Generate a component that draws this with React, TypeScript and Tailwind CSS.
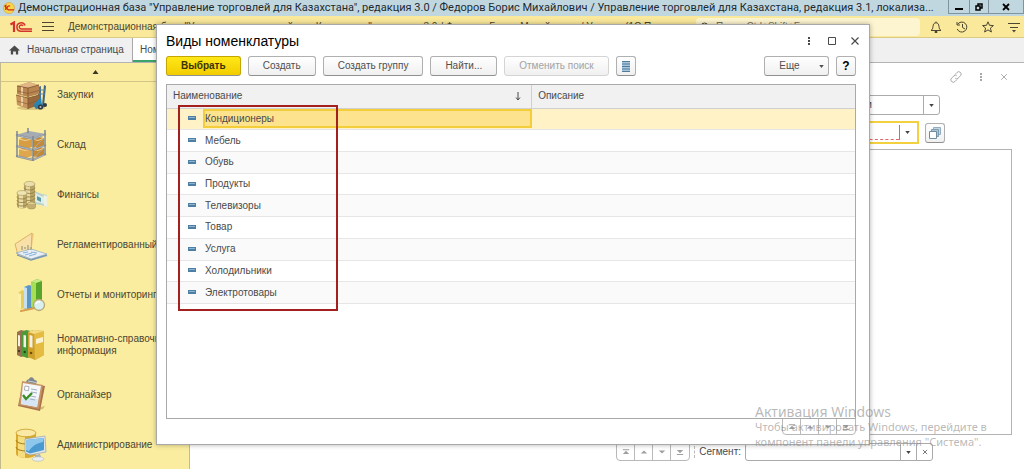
import React, { useState } from 'react';
import clsx from 'clsx';

interface Section {
  title: string;
  icon: React.ReactNode;
}

const CratesIcon = () => (
  <svg viewBox="0 0 36 36" className="w-9 h-9 shrink-0">
    <ellipse cx="18" cy="31" rx="14" ry="2" fill="#d9c67c" />
    <path d="M25 10l3-1v20h-3z" fill="#4d7391" />
    <path d="M31 8l2 1-2 20-2-1z" fill="#3f6583" />
    <path d="M26 13h6M26 17h6" stroke="#5c88a8" strokeWidth="1.2" />
    <path d="M4 9l12-4 10 3v9l-11 3-11-3z" fill="#b98651" />
    <path d="M4 9l12-4 10 3-11 3z" fill="#e0b784" />
    <path d="M3 18l12 3v11L4 28z" fill="#c8955e" />
    <path d="M15 21l11-3v10l-11 4z" fill="#9a693b" />
    <path d="M3 18l12 3 11-3M15 11v21M4 9l11 2 11-3" stroke="#7b522b" strokeWidth=".8" fill="none" />
    <path d="M8 10v7l2 .5v-7M8 19.500v9l2 .5v-9" fill="#e9cfa3" />
    <path d="M4 14l11 2.500 11-3M4 24l11 3 11-4" stroke="#7d5530" strokeWidth=".6" fill="none" />
    <path d="M21 27l7-7 1 8-5 3z" fill="#2787b6" />
    <path d="M20 28l10-1 2 3-9 2z" fill="#2e7ea8" />
    <circle cx="27.500" cy="30" r="2.600" fill="#353a40" />
    <circle cx="27.500" cy="30" r="1" fill="#b9c0c5" />
    <circle cx="32" cy="28" r="2" fill="#353a40" />
  </svg>
);

const RackIcon = () => (
  <svg viewBox="0 0 36 36" className="w-9 h-9 shrink-0">
    <path d="M3 30l15 4 15-6-3-2-14 5z" fill="#dcc97e" />
    <path d="M6 12l6-2 7 2v8l-6 2-7-2z" fill="#d69d45" />
    <path d="M20 12l6-2 5 1v8l-6 2-5-1z" fill="#c48a35" />
    <path d="M6 22l6-2 7 2v7l-6 2-7-2z" fill="#dda64f" />
    <path d="M20 22l6-2 5 1v7l-6 2-5-1z" fill="#c38933" />
    <path d="M6 12l6 1.500 7-1.500 6 1.500 5-2M6 22l6 1.500 7-1.500 6 1.500 5-2" stroke="#f0cf8d" strokeWidth="1" fill="none" />
    <path d="M3 8l13-4 17 3-13 5z" fill="#a5abb3" />
    <path d="M3 8l17 4 13-5M3 19l17 4 13-5M3 29l17 4 13-6" stroke="#858c96" strokeWidth="1.800" fill="none" />
    <path d="M3 8l17 4 13-5M3 19l17 4 13-5M3 29l17 4 13-6" stroke="#cdd2d8" strokeWidth=".6" fill="none" />
    <path d="M4 4v26M20 9v25M32 3v25M15 1v5" stroke="#7f8792" strokeWidth="1.500" />
    <path d="M20 22l12-12M20 31l12-11" stroke="#a9afb7" strokeWidth=".8" />
  </svg>
);

const MoneyIcon = () => (
  <svg viewBox="0 0 36 36" className="w-9 h-9 shrink-0">
    <path d="M21 14l8 3 5 1v12l-6-2-7-1z" fill="#b9d3cd" />
    <path d="M22 16l6 3 5 1v8l-5-2-6-1z" fill="#dfeee6" />
    <path d="M24 19l4 2v4l-4-2z" fill="#5c9aa3" />
    <path d="M31 18l3 1v11l-3-1z" fill="#eef2e3" />
    <path d="M11 7v19a5.500 2.500 0 0 0 11 0V7z" fill="#b8a566" />
    <path d="M13 8v20h4V8z" fill="#e5d8a0" />
    <ellipse cx="16.500" cy="7" rx="5.500" ry="2.600" fill="#eadfac" stroke="#a8955a" strokeWidth=".6" />
    <path d="M11 10.500a5.500 2.500 0 0 0 11 0M11 14a5.500 2.500 0 0 0 11 0M11 17.500a5.500 2.500 0 0 0 11 0M11 21a5.500 2.500 0 0 0 11 0M11 24.500a5.500 2.500 0 0 0 11 0" stroke="#8e7b42" strokeWidth=".8" fill="none" />
    <path d="M4 16v13a5 2.500 0 0 0 10 0V16z" fill="#bca867" />
    <path d="M6 17v14h4V17z" fill="#eadda6" />
    <ellipse cx="9" cy="16" rx="5" ry="2.400" fill="#efe4b4" stroke="#a8955a" strokeWidth=".6" />
    <path d="M4 19.500a5 2.500 0 0 0 10 0M4 23a5 2.500 0 0 0 10 0M4 26.500a5 2.500 0 0 0 10 0" stroke="#8e7b42" strokeWidth=".8" fill="none" />
    <ellipse cx="18.500" cy="27" rx="4" ry="2" fill="#e2d395" stroke="#9a884d" strokeWidth=".6" />
    <path d="M14.500 27v3a4 2 0 0 0 8 0v-3" fill="#c3b070" stroke="#9a884d" strokeWidth=".5" />
  </svg>
);

const ReportingIcon = () => (
  <svg viewBox="0 0 36 36" className="w-9 h-9 shrink-0">
    <path d="M2 17L19 6l2 1-3 19-13 3z" fill="#f3cf86" />
    <path d="M2 17L19 6l-1 18-13 4z" fill="#f8e0a8" stroke="#d9a452" strokeWidth=".8" />
    <path d="M4 27l14-3 17 5-15 4z" fill="#a6bdd0" />
    <path d="M3 26l15-4 16 5-16 5z" fill="#e8eff6" stroke="#8fa8bd" strokeWidth=".7" />
    <path d="M4 28l14 5 16-5" stroke="#7592ac" strokeWidth="1.200" fill="none" />
    <path d="M10 26l5-1M12 28l7-2M16 29l7-2M18 25l6 1" stroke="#86b1d8" strokeWidth="1" />
    <path d="M9 23v-4M12 22v-2M15 23v-5M18 23v-3" stroke="#a6a583" strokeWidth="1.400" />
  </svg>
);

const ChartIcon = () => (
  <svg viewBox="0 0 36 36" className="w-9 h-9 shrink-0">
    <path d="M5 16l4-3 3 1v17l-4 1-3-2z" fill="#e8cd5d" />
    <path d="M5 16l3 1v15l-3-2z" fill="#fbf0aa" />
    <path d="M11 10l5-2 3 1v22l-5 2-3-2z" fill="#5b97c2" />
    <path d="M11 10l3 1v21l-3-1z" fill="#c6e1f2" />
    <path d="M18 5l6-3 5 2v25l-6 3-5-2z" fill="#57a52a" />
    <path d="M18 5l5 1v25l-5-1z" fill="#a8de55" />
    <path d="M18 5l6-3 5 2-6 2z" fill="#c8ec84" />
    <path d="M22 31L8 34" stroke="#d7a151" strokeWidth="2.200" strokeLinecap="round" />
    <circle cx="26" cy="28" r="5.500" fill="#d9eff0" stroke="#b8a86b" strokeWidth="1.300" />
    <path d="M23 27a3 3 0 0 1 4-2" stroke="#fff" strokeWidth="1.500" fill="none" />
  </svg>
);

const BindersIcon = () => (
  <svg viewBox="0 0 36 36" className="w-9 h-9 shrink-0">
    <path d="M4 5l4-2 4 1v25l-4 1-4-2z" fill="#9b6f52" />
    <path d="M9 5l4-2 5 1v26l-4 1-5-2z" fill="#4c9a38" />
    <path d="M15 5l5-2 11 1v24l-9 5-7-3z" fill="#cf9f2b" />
    <path d="M21 6l10-2v24l-9 5z" fill="#e5bb42" />
    <path d="M15 5l6-2 10 1-10 3z" fill="#f3db85" />
    <path d="M5 8l2 .5v11l-2-.5zM10.500 8l2.500.5v12l-2.500-.5zM16.500 8l3 .7v12l-3-.7z" fill="#f3f0e4" />
    <path d="M23 12l7-2v5l-7 2z" fill="#fbf3cf" />
    <circle cx="6" cy="24" r="1.100" fill="#3d2c20" />
    <circle cx="11.700" cy="25" r="1.200" fill="#1d4d17" />
    <circle cx="18" cy="26" r="1.300" fill="#6e500e" />
  </svg>
);

const ClipboardIcon = () => (
  <svg viewBox="0 0 36 36" className="w-9 h-9 shrink-0">
    <path d="M28 30l4-1-2 3-5 1z" fill="#cfbd72" />
    <path d="M10 5l22 4-5 25-22-5z" fill="#a9734a" />
    <path d="M9 4l21 4-4 24-20-4z" fill="#c69466" />
    <path d="M10 6l18 3-4 21-16-3z" fill="#f4f7fa" />
    <path d="M10 20l15 2-1 8-16-3z" fill="#d6e6f4" />
    <path d="M12 9l4 .7-.6 4-4-.7z" fill="#fff" stroke="#8c9299" strokeWidth=".7" />
    <path d="M18 12l6 1M18 15l6 1M17 19l6 1M17 22l5 1" stroke="#9eb0c0" strokeWidth="1" />
    <path d="M10 18l3 4 6-6" stroke="#3c8d24" strokeWidth="2.400" fill="none" />
    <path d="M14 3l2-1c1-3 5-2 5 .5l3 1.500-1 3-10-2z" fill="#7e868f" />
    <path d="M15 4l8 1.500" stroke="#c9ced4" strokeWidth="1" />
  </svg>
);

const ServerIcon = () => (
  <svg viewBox="0 0 36 36" className="w-9 h-9 shrink-0">
    <path d="M3 6v21a10 4 0 0 0 20 0V6z" fill="#d9aa2d" />
    <path d="M5 8v22l7 1V9z" fill="#f6dd7d" />
    <path d="M3 13a10 4 0 0 0 20 0M3 20a10 4 0 0 0 20 0" stroke="#a87e18" strokeWidth="1" fill="none" />
    <ellipse cx="13" cy="6" rx="10" ry="3.800" fill="#f9e9a4" stroke="#c69a29" strokeWidth=".8" />
    <path d="M12 12l20-3 1 16-16 3-5-2z" fill="#dfe5ea" stroke="#98a3ad" strokeWidth=".7" />
    <path d="M13 13l18-2v12l-14 3.500-4-2z" fill="#4a99d0" />
    <path d="M13 13l18-2-1 4c-6 1-11 4-14 9l-3-1z" fill="#8dc8ec" />
    <path d="M22 28l5-1 1 3-6 1z" fill="#aab3bb" />
    <ellipse cx="25" cy="32" rx="6" ry="2.200" fill="#eceff1" stroke="#adb5bc" strokeWidth=".6" />
  </svg>
);

const sections: Section[] = [
  { title: 'Закупки', icon: <CratesIcon /> },
  { title: 'Склад', icon: <RackIcon /> },
  { title: 'Финансы', icon: <MoneyIcon /> },
  { title: 'Регламентированный', icon: <ReportingIcon /> },
  { title: 'Отчеты и мониторинг', icon: <ChartIcon /> },
  { title: 'Нормативно-справочная информация', icon: <BindersIcon /> },
  { title: 'Органайзер', icon: <ClipboardIcon /> },
  { title: 'Администрирование', icon: <ServerIcon /> }
];

const kinds = [
  'Кондиционеры',
  'Мебель',
  'Обувь',
  'Продукты',
  'Телевизоры',
  'Товар',
  'Услуга',
  'Холодильники',
  'Электротовары'
];

const Caret = ({ className }: { className?: string }) => (
  <svg viewBox="0 0 6 4" className={clsx('w-[5px] h-[3px]', className)}>
    <path d="M0 0h6L3 4z" fill="currentColor" />
  </svg>
);

const DotsIcon = () => (
  <svg viewBox="0 0 10 10" className="w-2.5 h-2.5" fill="currentColor">
    <path d="M4 1h2v2H4zM4 4h2v2H4zM4 7h2v2H4z" />
  </svg>
);

const CrossIcon = ({ className }: { className?: string }) => (
  <svg viewBox="0 0 10 10" className={className} stroke="currentColor" strokeWidth="1.200">
    <path d="M1.500 1.500l7 7M8.500 1.500l-7 7" />
  </svg>
);

const pagerPaths = [
  { label: 'В начало', d: 'M1 1h8v1.200H1zM5 3l4 4H1z' },
  { label: 'Назад', d: 'M5 2.500l4 4H1z' },
  { label: 'Вперед', d: 'M1 2.500h8l-4 4z' },
  { label: 'В конец', d: 'M1 2h8L5 6zM1 7h8v1.200H1z' }
];

function Pager() {
  return (
    <div className="flex border border-[#b9b9b9] divide-x divide-[#b9b9b9] rounded-b-sm">
      {pagerPaths.map((p) => (
        <button key={p.label} type="button" aria-label={p.label} className="w-[18px] h-[15px] flex items-center justify-center text-[#a0a0a0]">
          <svg viewBox="0 0 10 9" className="w-2 h-2" fill="currentColor">
            <path d={p.d} />
          </svg>
        </button>
      ))}
    </div>
  );
}

interface ToolButtonProps {
  children: React.ReactNode;
  className?: string;
  disabled?: boolean;
  label?: string;
}

function ToolButton({ children, className, disabled, label }: ToolButtonProps) {
  return (
    <button
      type="button"
      disabled={disabled}
      aria-label={label}
      className={clsx(
        'h-5 flex items-center justify-center rounded-[3px] border whitespace-nowrap',
        className ?? 'px-3.5 bg-linear-to-b from-white to-[#f0f0f0]',
        disabled ? 'border-[#d4d4d4] text-[#a3a3a3]' : 'border-[#b0b0b0] border-b-[#909090]'
      )}
    >
      {children}
    </button>
  );
}

function TitleBar() {
  return (
    <header className="h-4 flex items-center bg-[#c1d7e0] pl-[3px] font-['Roboto','Open_Sans',sans-serif] text-[11px] text-[#1d2a30]">
      <svg viewBox="0 0 12 12" className="w-3 h-3 shrink-0 mr-[3px]">
        <circle cx="6" cy="6" r="5.500" fill="#f8d648" stroke="#dca24b" strokeWidth=".7" />
        <path d="M1.500 4.500l1.300-1v4.500M7 4.200a2 2 0 1 0-.2 3.600H11" stroke="#d2261d" strokeWidth="1.300" fill="none" />
      </svg>
      <h1 className="flex-1 min-w-0 truncate leading-4">
        Демонстрационная база "Управление торговлей для Казахстана", редакция 3.0 / Федоров Борис Михайлович / Управление торговлей для Казахстана, редакция 3.1, локализа...
      </h1>
      <div className="flex h-3.5 self-start ml-1 border border-t-0 border-[#7f949e] divide-x divide-[#7f949e] text-black">
        <button type="button" aria-label="Свернуть" className="w-[21px] flex items-center justify-center">
          <svg viewBox="0 0 8 8" className="w-2 h-2"><path d="M0 5h8v2H0z" /></svg>
        </button>
        <button type="button" aria-label="Развернуть" className="w-[19px] flex items-center justify-center">
          <svg viewBox="0 0 8 8" className="w-2 h-2" fill="none" stroke="currentColor" strokeWidth="1.500">
            <path d="M1 3h4v4H1zM3 3V1h4v4H5" />
          </svg>
        </button>
        <button type="button" aria-label="Закрыть" className="w-[34px] flex items-center justify-center">
          <svg viewBox="0 0 8 8" className="w-2 h-2" fill="none" stroke="currentColor" strokeWidth="1.800">
            <path d="M1 1l6 6M7 1L1 7" />
          </svg>
        </button>
      </div>
    </header>
  );
}

function AppBar() {
  return (
    <div className="h-[22px] flex items-center bg-[#fae89b] border-b border-[#dccb83] pl-2.5 pr-1 text-[#4a4632]">
      <svg viewBox="0 0 22 12" className="w-[22px] h-3 shrink-0" fill="none" stroke="#d4322b">
        <path d="M0.500 3.500L4 1.500V11" strokeWidth="2.200" />
        <path d="M15 4.500A4.200 4.200 0 1 0 11 10.300h11" strokeWidth="1.500" />
        <path d="M13 5A2 2 0 1 0 11 8h11" strokeWidth="1.300" />
      </svg>
      <button type="button" aria-label="Меню" className="ml-2.5">
        <svg viewBox="0 0 12 10" className="w-3 h-2.5" stroke="currentColor">
          <path d="M0 .5h12M0 4.500h12M0 8.500h12" />
        </svg>
      </button>
      <div className="flex-1 min-w-0 ml-[14px] truncate">
        Демонстрационная база "Управление торговлей для Казахстана", редакция 3.0 / Федоров Борис Михайлович / Управ... (1С:Предприятие)
      </div>
      <label className="flex items-center w-[224px] h-[18px] px-1 gap-1.5 bg-[#fdf5cf] rounded-sm">
        <svg viewBox="0 0 10 10" className="w-2.5 h-2.5 shrink-0" fill="none" stroke="currentColor">
          <circle cx="4.500" cy="4.500" r="3.500" />
          <path d="M7 7l3 3" />
        </svg>
        <input aria-label="Поиск" placeholder="Поиск Ctrl+Shift+F" className="w-full bg-transparent outline-none placeholder:text-[#77705a]" />
      </label>
      <div className="flex items-center gap-3.5 ml-2.5">
        <button type="button" aria-label="Уведомления">
          <svg viewBox="0 0 12 12" className="w-3 h-3" fill="none" stroke="currentColor">
            <path d="M6 .5v1M1 9.500c1.500-1 1.800-2 2-4C3.200 3 4.200 1.800 6 1.800S8.800 3 9 5.500c.2 2 .5 3 2 4zM5 10.500h2v1H5z" />
          </svg>
        </button>
        <button type="button" aria-label="История">
          <svg viewBox="0 0 12 12" className="w-3 h-3" fill="none" stroke="currentColor">
            <path d="M1.500 3.500A5 5 0 1 1 1.200 8M1 1v3h3M6.500 3v3.500L9 8" />
          </svg>
        </button>
        <button type="button" aria-label="Избранное">
          <svg viewBox="0 0 12 12" className="w-3 h-3" fill="none" stroke="currentColor">
            <path d="M6 .8l1.500 3.500 3.900.3-3 2.500 1 3.900L6 8.900 2.600 11l1-3.900-3-2.500 3.900-.3z" />
          </svg>
        </button>
        <button type="button" aria-label="Настройки">
          <svg viewBox="0 0 12 12" className="w-3 h-3" fill="none" stroke="currentColor">
            <path d="M0 2.500h12M2 6.500h8" />
            <path d="M4 9h4l-2 2.500z" fill="currentColor" stroke="none" />
          </svg>
        </button>
      </div>
    </div>
  );
}

function TabBar() {
  return (
    <nav className="h-[25px] flex bg-[#f0f0f0] border-b border-[#b3b3b3] text-[#4a4a4a]">
      <a href="#" className="w-[133px] flex items-center pl-[9px] gap-[7px] border-r border-[#a8a8a8]">
        <svg viewBox="0 0 12 10" className="w-[11px] h-2.5" fill="currentColor">
          <path d="M6 0l6 5.500h-2V10H7.500V6.500h-3V10H2V5.500H0z" />
        </svg>
        Начальная страница
      </a>
      <a href="#" className="flex items-center px-[7px] bg-white border-r border-[#a8a8a8] shadow-[inset_0_-2px_0_#3aa36c]">
        Номенклатура
      </a>
    </nav>
  );
}

function Sidebar() {
  return (
    <aside className="w-[190px] shrink-0 flex flex-col bg-[#fbed9f] border-x border-[#c4bb8d] text-[#4a4632]">
      <button type="button" aria-label="Прокрутить вверх" className="h-[19px] shrink-0 flex items-center justify-center border-b border-[#d3c587]">
        <svg viewBox="0 0 6 4" className="w-[7px] h-1"><path d="M0 4h6L3 0z" fill="#3a3728" /></svg>
      </button>
      <div className="flex-1 min-h-0 overflow-hidden">
        <ul className="-mt-3">
          {sections.map((s) => (
            <li key={s.title}>
              <a href="#" className="h-[50px] flex items-center pl-3 pr-2.5 gap-2 leading-3">
                {s.icon}
                <span>{s.title}</span>
              </a>
            </li>
          ))}
        </ul>
      </div>
    </aside>
  );
}

function Workspace() {
  return (
    <main className="flex-1 min-w-0 flex flex-col pl-2 pr-3 bg-white">
      <div className="h-[28px] mb-1 pr-1 flex items-center justify-end gap-3.5 text-[#a8a8a8]">
        <button type="button" aria-label="Получить ссылку">
          <svg viewBox="0 0 12 12" className="w-3 h-3" fill="none" stroke="currentColor">
            <path d="M5 3.500l2-2a2.300 2.300 0 0 1 3.500 3.300L8 7.200a2 2 0 0 1-2.800 0M7 8.500l-2 2a2.300 2.300 0 0 1-3.500-3.300L4 4.800a2 2 0 0 1 2.800 0" />
          </svg>
        </button>
        <button type="button" aria-label="Меню формы"><DotsIcon /></button>
        <button type="button" aria-label="Закрыть форму"><CrossIcon className="w-2 h-2" /></button>
      </div>
      <div className="flex justify-end pr-[72px]">
        <div className="flex h-5 border border-[#ababab] rounded-[3px]">
          <input aria-label="Вид" defaultValue="м" className="w-[62px] px-1 outline-none text-[#3f4c63]" />
          <button type="button" aria-label="Выбрать вид" className="w-4 flex items-center justify-center border-l border-[#ababab] text-[#444]"><Caret /></button>
        </div>
      </div>
      <div className="flex items-center justify-end gap-1.5 pr-[67px] mt-1.5">
        <div className="flex h-[23px] p-0.5 border-2 border-[#f3d03e]">
          <input aria-label="Значение" className="w-10 outline-none border-b border-dashed border-b-[#dd6666]" />
          <button type="button" aria-label="Выбрать значение" className="w-4 flex items-center justify-center border-l border-[#888] text-[#444]"><Caret /></button>
        </div>
        <ToolButton label="Открыть список" className="w-5 bg-linear-to-b from-white to-[#f0f0f0]">
          <svg viewBox="0 0 14 14" className="w-3.5 h-3.5 shrink-0" stroke="#6d8ca0">
            <path d="M5.500 1.500h7v7h-7z" fill="#c3d6e2" stroke="#93adbf" />
            <path d="M3.500 3.500h7v7h-7z" fill="#a9c3d3" stroke="#7f9db1" />
            <path d="M1.500 5.500h7v7h-7z" fill="#fff" />
          </svg>
        </ToolButton>
      </div>
      <div className="flex-1 mt-[5px] border border-[#b3b3b3]" />
      <div className="flex items-center mt-2 mb-2 pr-[79px] justify-end">
        <Pager />
        <label htmlFor="segment" className="ml-1 pl-1 border-l border-dashed border-[#bbb] text-[#4a4a4a]">Сегмент:</label>
        <div className="flex ml-1 h-[18px] border border-[#ababab] rounded-[3px]">
          <input id="segment" className="w-[154px] outline-none" />
          <button type="button" aria-label="Выбрать сегмент" className="w-4 flex items-center justify-center border-l border-[#ababab] text-[#444]"><Caret /></button>
          <button type="button" aria-label="Очистить" className="w-4 flex items-center justify-center border-l border-[#ababab] text-[#444]"><CrossIcon className="w-1.5 h-1.5" /></button>
        </div>
      </div>
    </main>
  );
}

function KindsDialog() {
  const [selected, setSelected] = useState(0);

  return (
    <section
      role="dialog"
      aria-labelledby="dialog-title"
      className="absolute left-[156px] right-[154px] top-6 bottom-6 flex flex-col bg-white border border-[#a9a9a9] shadow-[0_0_5px_rgba(0,0,0,0.3)] pl-[9px] pb-[9px] pr-[13px]"
    >
      <div className="h-[31px] shrink-0 flex items-center -mr-1 text-[#4a4a4a]">
        <h2 id="dialog-title" className="flex-1 text-[14px] text-black">Виды номенклатуры</h2>
        <div className="flex items-center gap-3.5">
          <button type="button" aria-label="Еще действия"><DotsIcon /></button>
          <button type="button" aria-label="Развернуть окно">
            <svg viewBox="0 0 8 8" className="w-2 h-2" fill="none" stroke="currentColor"><path d="M.5.5h7v7h-7z" /></svg>
          </button>
          <button type="button" aria-label="Закрыть окно"><CrossIcon className="w-2.5 h-2.5" /></button>
        </div>
      </div>
      <div className="shrink-0 flex gap-[7px] text-[#4f4f4f]">
        <ToolButton className="px-3.5 bg-linear-to-b from-[#ffe817] to-[#f2cd00] border-[#c5a500] font-bold text-[#3a3200]">Выбрать</ToolButton>
        <ToolButton>Создать</ToolButton>
        <ToolButton>Создать группу</ToolButton>
        <ToolButton>Найти...</ToolButton>
        <ToolButton disabled>Отменить поиск</ToolButton>
        <ToolButton label="Режим просмотра" className="w-5 bg-linear-to-b from-white to-[#f0f0f0]">
          <svg viewBox="0 0 8 11" className="w-2 h-[11px]">
            <path d="M0 0h8v11H0z" fill="#a9c5d9" />
            <path d="M0 .5h8M0 3h8M0 5.500h8M0 8h8M0 10.500h8" stroke="#4f7d9f" />
          </svg>
        </ToolButton>
        <div className="flex-1" />
        <ToolButton className="w-[65px] pl-2.5 bg-linear-to-b from-white to-[#f0f0f0]">
          Еще
          <Caret className="ml-[19px]" />
        </ToolButton>
        <ToolButton className="w-5 bg-linear-to-b from-white to-[#f0f0f0] font-bold text-[12px] text-black">?</ToolButton>
      </div>
      <div className="relative flex-1 min-h-0 mt-2 border border-[#a9a9a9]">
        <table className="w-full h-[219px] table-fixed text-left text-[#4a4a4a]">
          <thead>
            <tr className="h-[23px] bg-[#f1f1f1] border-b border-[#d0d0d0]">
              <th className="w-[53%] px-1.5 font-normal">
                <div className="flex items-center justify-between pr-1">
                  Наименование
                  <svg viewBox="0 0 6 9" className="w-1.5 h-[9px]" fill="none" stroke="currentColor">
                    <path d="M3 0v8M1 5.500l2 2.500 2-2.500" />
                  </svg>
                </div>
              </th>
              <th className="px-1.5 font-normal border-l border-[#d0d0d0]">Описание</th>
            </tr>
          </thead>
          <tbody>
            {kinds.map((kind, i) => (
              <tr
                key={kind}
                onClick={() => setSelected(i)}
                className={clsx(
                  'border-b border-[#e6e6e6]',
                  selected === i ? 'bg-[#fff2c6]' : i % 2 === 0 ? 'bg-[#fafafa]' : 'bg-white'
                )}
              >
                <td className="p-0">
                  <div className="flex items-center pl-[21px] gap-[7px]">
                    <svg viewBox="0 0 8 5" className="w-2 h-[5px] shrink-0">
                      <path d="M0 0h8v4H0z" fill="#4d7fa5" />
                      <path d="M1 1.500h6" stroke="#8fb4cf" />
                    </svg>
                    <span
                      className={clsx(
                        'flex-1 h-[19px] flex items-center border-2',
                        selected === i ? 'bg-[#fde38d] border-[#f3cd3a]' : 'border-transparent'
                      )}
                    >
                      {kind}
                    </span>
                  </div>
                </td>
                <td />
              </tr>
            ))}
          </tbody>
        </table>
        <div className="absolute left-[11px] top-5 w-[160px] h-[206px] border-2 border-[#a3201f] pointer-events-none" />
      </div>
      <div className="shrink-0 flex justify-end -mt-px">
        <Pager />
      </div>
    </section>
  );
}

export default function App() {
  return (
    <div className="relative h-screen flex flex-col overflow-hidden font-['Liberation_Sans',Arial,sans-serif] text-[10px] leading-3">
      <TitleBar />
      <AppBar />
      <TabBar />
      <div className="flex-1 min-h-0 flex">
        <Sidebar />
        <Workspace />
      </div>
      <KindsDialog />
      <div className="absolute right-6 bottom-5 w-[245px] font-['Noto_Sans','Open_Sans',sans-serif] text-[11px] leading-[15px] text-[#8a8a8a]/60 pointer-events-none">
        <p className="text-[14px]">Активация Windows</p>
        <p>
          Чтобы активировать Windows, перейдите в<br />
          компонент панели управления "Система".
        </p>
      </div>
    </div>
  );
}
